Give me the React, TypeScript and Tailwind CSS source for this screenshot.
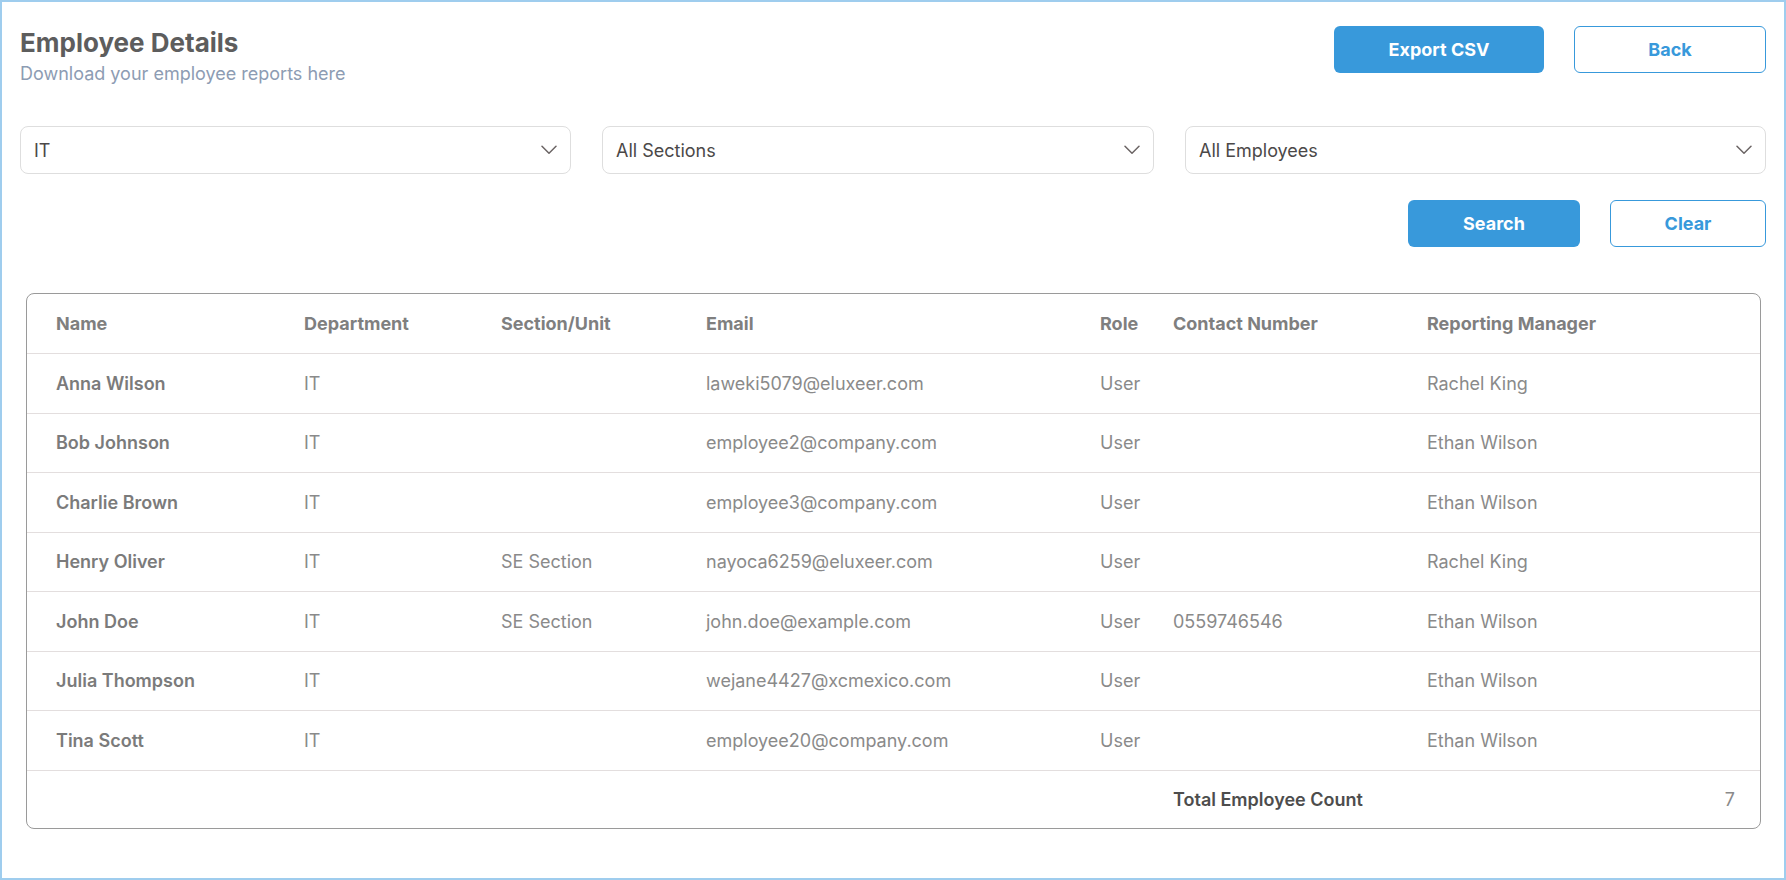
import React from "react";

const rows = [
  { name: "Anna Wilson", dept: "IT", section: "", email: "laweki5079@eluxeer.com", role: "User", contact: "", manager: "Rachel King" },
  { name: "Bob Johnson", dept: "IT", section: "", email: "employee2@company.com", role: "User", contact: "", manager: "Ethan Wilson" },
  { name: "Charlie Brown", dept: "IT", section: "", email: "employee3@company.com", role: "User", contact: "", manager: "Ethan Wilson" },
  { name: "Henry Oliver", dept: "IT", section: "SE Section", email: "nayoca6259@eluxeer.com", role: "User", contact: "", manager: "Rachel King" },
  { name: "John Doe", dept: "IT", section: "SE Section", email: "john.doe@example.com", role: "User", contact: "0559746546", manager: "Ethan Wilson" },
  { name: "Julia Thompson", dept: "IT", section: "", email: "wejane4427@xcmexico.com", role: "User", contact: "", manager: "Ethan Wilson" },
  { name: "Tina Scott", dept: "IT", section: "", email: "employee20@company.com", role: "User", contact: "", manager: "Ethan Wilson" },
];

function Chevron() {
  return (
    <svg width="16" height="10" viewBox="0 0 16 10" fill="none" className="shrink-0">
      <path d="M1 1.2 L8 8.2 L15 1.2" stroke="#6b6464" strokeWidth="1.5" strokeLinecap="round" strokeLinejoin="round" />
    </svg>
  );
}

function Select({ label }: { label: string }) {
  return (
    <div className="h-[48px] flex items-center justify-between rounded-[8px] border border-[#dedede] bg-white pl-[13px] pr-[13px]">
      <span className="text-[18px] text-[#4b4848]">{label}</span>
      <Chevron />
    </div>
  );
}

const grid = "grid grid-cols-[277px_197px_205px_394px_73px_254px_1fr] items-center";

export default function App() {
  return (
    <div
      className="w-[1786px] h-[880px] border-2 border-[#9fcdee] bg-white px-[18px] pt-[24px]"
      style={{ fontFamily: "Inter, 'Noto Sans', sans-serif" }}
    >
      <div className="flex items-start justify-between">
        <div className="pt-[2px]">
          <h1 className="text-[26px] leading-[30px] font-bold text-[#5d5d5d]">Employee Details</h1>
          <p className="mt-[2px] text-[18px] leading-[27px] text-[#8d9cb3]">Download your employee reports here</p>
        </div>
        <div className="flex items-center gap-[30px]">
          <button className="w-[210px] h-[47px] rounded-[6px] bg-[#3899db] text-white text-[18px] font-bold">Export CSV</button>
          <button className="w-[192px] h-[47px] rounded-[6px] border border-[#3899db] bg-white text-[#3899db] text-[18px] font-bold">Back</button>
        </div>
      </div>

      <div className="mt-[39px] grid grid-cols-[551px_552px_1fr] gap-x-[31px]">
        <Select label="IT" />
        <Select label="All Sections" />
        <Select label="All Employees" />
      </div>

      <div className="mt-[26px] flex justify-end gap-[30px]">
        <button className="w-[172px] h-[47px] rounded-[6px] bg-[#3899db] text-white text-[18px] font-bold">Search</button>
        <button className="w-[156px] h-[47px] rounded-[6px] border border-[#3899db] bg-white text-[#3899db] text-[18px] font-bold">Clear</button>
      </div>

      <div className="mt-[46px] ml-[6px] mr-[5px] rounded-[8px] border border-[#9a9a9a] overflow-hidden">
        <div className={`${grid} h-[59px] text-[18px] font-bold text-[#7f7f7f]`}>
          <div className="pl-[29px]">Name</div>
          <div>Department</div>
          <div>Section/Unit</div>
          <div>Email</div>
          <div>Role</div>
          <div>Contact Number</div>
          <div>Reporting Manager</div>
        </div>
        {rows.map((r) => (
          <div key={r.name} className={`${grid} h-[59.5px] border-t border-[#e3dede] text-[18px] text-[#8a8a8a]`}>
            <div className="pl-[29px] font-semibold text-[#7b7b7b]">{r.name}</div>
            <div>{r.dept}</div>
            <div>{r.section}</div>
            <div>{r.email}</div>
            <div>{r.role}</div>
            <div>{r.contact}</div>
            <div>{r.manager}</div>
          </div>
        ))}
        <div className={`${grid} h-[58px] border-t border-[#e3dede] text-[18px]`}>
          <div className="col-start-6 font-semibold text-[#4d4d4d] whitespace-nowrap">Total Employee Count</div>
          <div className="text-right pr-[25px] text-[#8a8a8a]">7</div>
        </div>
      </div>
    </div>
  );
}
